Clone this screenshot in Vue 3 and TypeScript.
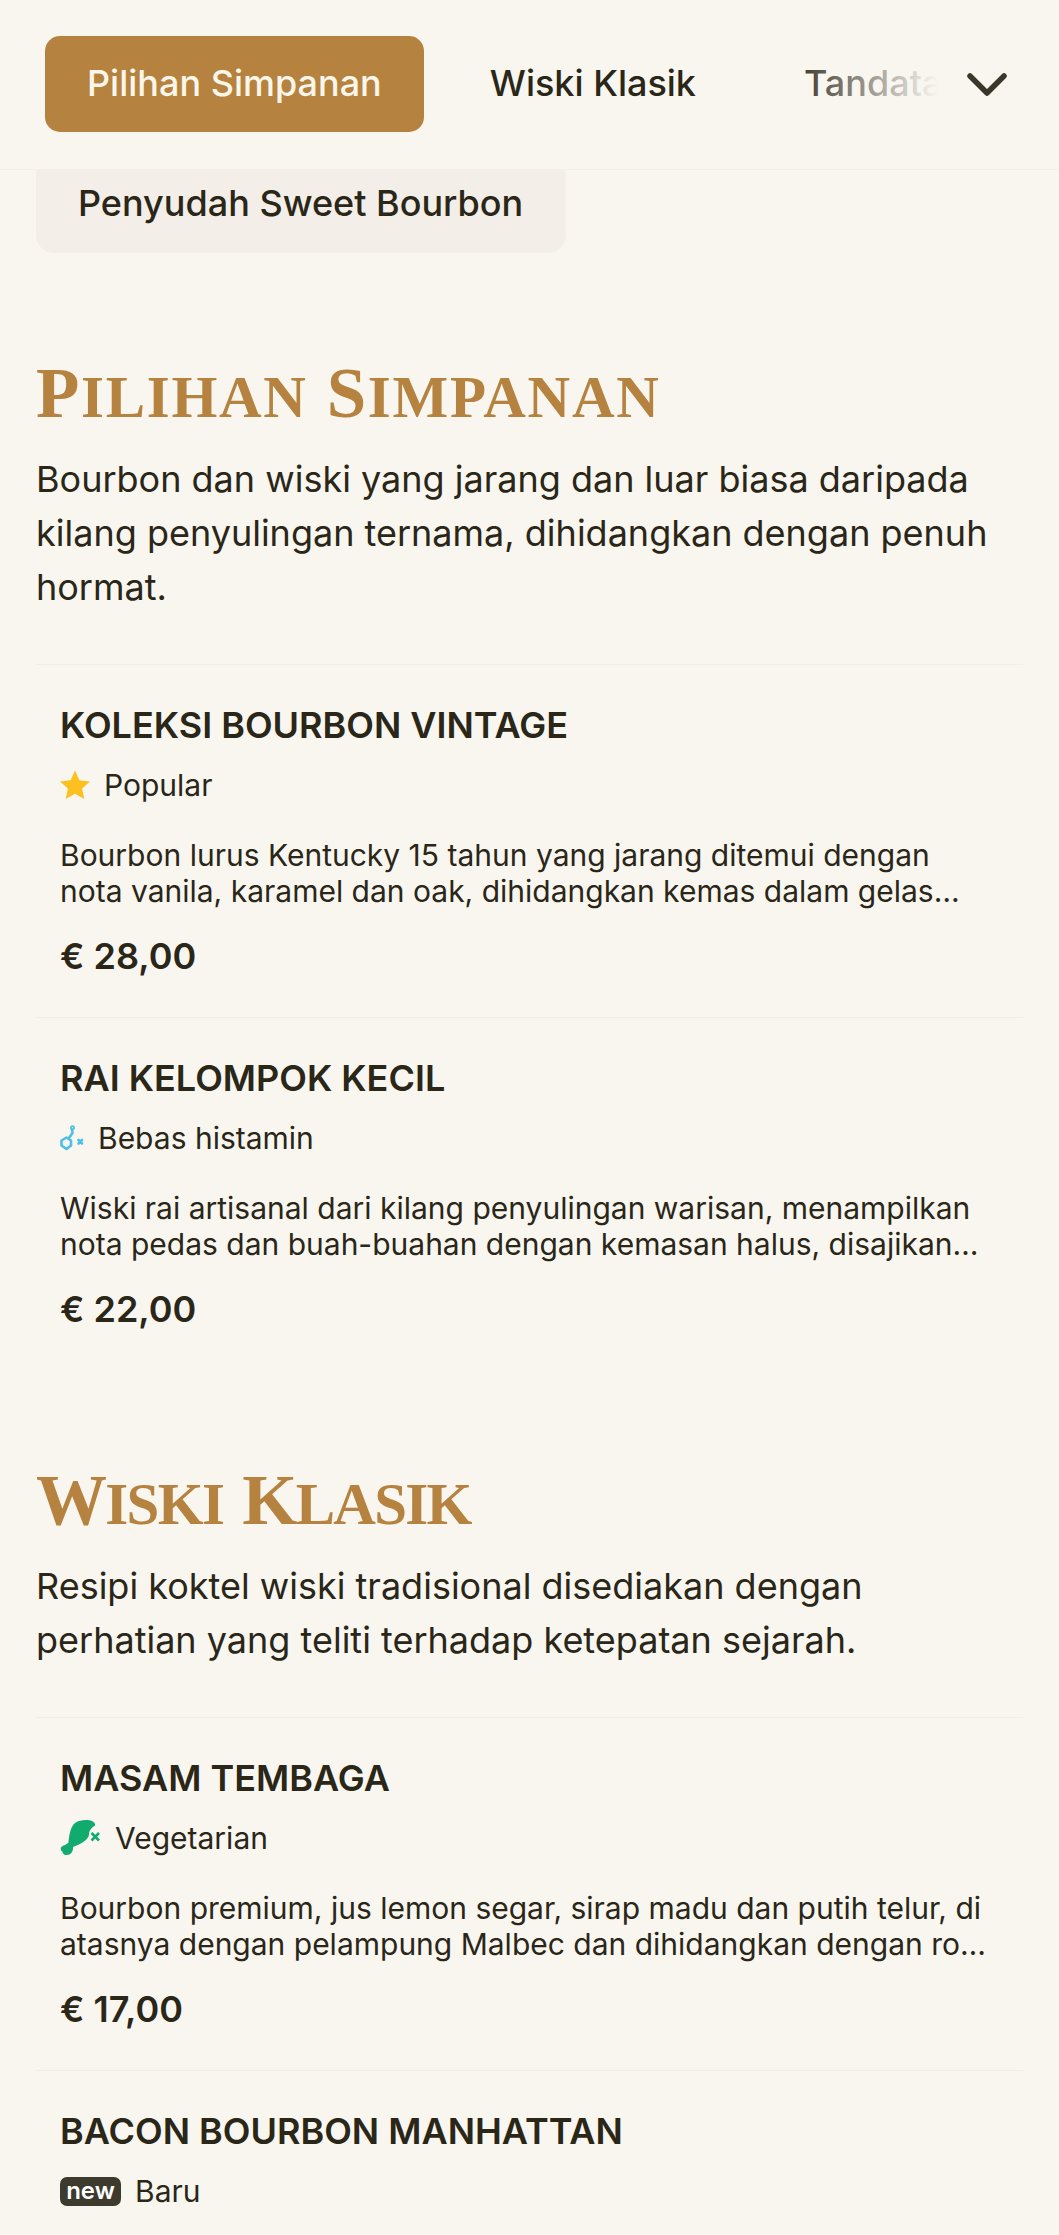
<script setup lang="ts">
type Tag = 'star' | 'histamine' | 'vegetarian' | 'new'
interface Item { name: string; tag: Tag; label: string; desc: string; price: string }
interface Section { words: string[]; tracking: number; intro: string; items: Item[] }

const tabs = ['Pilihan Simpanan', 'Wiski Klasik', 'Tandatangan Rumah']

const sections: Section[] = [
  {
    words: ['Pilihan', 'Simpanan'],
    tracking: 1.7,
    intro: 'Bourbon dan wiski yang jarang dan luar biasa daripada kilang penyulingan ternama, dihidangkan dengan penuh hormat.',
    items: [
      { name: 'KOLEKSI BOURBON VINTAGE', tag: 'star', label: 'Popular', desc: 'Bourbon lurus Kentucky 15 tahun yang jarang ditemui dengan nota vanila, karamel dan oak, dihidangkan kemas dalam gelas kristal pilihan tetamu yang budiman.', price: '€ 28,00' },
      { name: 'RAI KELOMPOK KECIL', tag: 'histamine', label: 'Bebas histamin', desc: 'Wiski rai artisanal dari kilang penyulingan warisan, menampilkan nota pedas dan buah-buahan dengan kemasan halus, disajikan bersama ais besar yang jernih.', price: '€ 22,00' },
    ],
  },
  {
    words: ['Wiski', 'Klasik'],
    tracking: -1.7,
    intro: 'Resipi koktel wiski tradisional disediakan dengan perhatian yang teliti terhadap ketepatan sejarah.',
    items: [
      { name: 'MASAM TEMBAGA', tag: 'vegetarian', label: 'Vegetarian', desc: 'Bourbon premium, jus lemon segar, sirap madu dan putih telur, di atasnya dengan pelampung Malbec dan dihidangkan dengan roh segar yang harum semerbak.', price: '€ 17,00' },
      { name: 'BACON BOURBON MANHATTAN', tag: 'new', label: 'Baru', desc: 'Bourbon diselitkan bacon, vermouth manis dan bitters.', price: '€ 19,00' },
    ],
  },
]
</script>

<template>
  <div class="page">
    <nav class="nav">
      <div class="tabs">
        <button v-for="(tab, i) in tabs" :key="tab" class="tab" :class="{ active: i === 0 }">{{ tab }}</button>
      </div>
      <div class="more">
        <svg class="chevron" viewBox="0 0 44 26" fill="none" stroke="#3a372a" stroke-width="5.5" stroke-linecap="round" stroke-linejoin="round">
          <path d="M5 5 L22 22 L39 5" />
        </svg>
      </div>
    </nav>

    <main class="content">
      <div class="chip">Penyudah Sweet Bourbon</div>

      <section v-for="section in sections" :key="section.words[0]" class="section">
        <h2 class="heading" :style="{ letterSpacing: section.tracking + 'px' }">
          <span v-for="word in section.words" :key="word" class="word"><span class="initial">{{ word[0] }}</span>{{ word.slice(1) }}</span>
        </h2>
        <p class="intro">{{ section.intro }}</p>

        <article v-for="item in section.items" :key="item.name" class="item">
          <h3 class="name">{{ item.name }}</h3>
          <div class="tag">
            <svg v-if="item.tag === 'star'" class="icon-star" viewBox="0 0 30 30">
              <path fill="#fcc11f" d="M15 0.5 L19.4 10.2 L30 11.4 L22.1 18.5 L24.3 29 L15 23.7 L5.7 29 L7.9 18.5 L0 11.4 L10.6 10.2 Z" />
            </svg>
            <svg v-else-if="item.tag === 'histamine'" class="icon-histamine" viewBox="0 0 24 26" fill="none" stroke="#4cc0e6" stroke-width="2.6" stroke-linecap="round" stroke-linejoin="round">
              <path d="M1.5 15.5 L6.5 12.5 L11 15.5 L11 20.5 L6.5 24 L1.5 20.5 Z" />
              <path d="M9 13 L12.5 8 L12 4.5" />
              <circle cx="12.5" cy="2.7" r="1.6" stroke-width="1.8" />
              <path d="M18.5 15 L22 18.5 M22 15 L18.5 18.5" />
            </svg>
            <svg v-else-if="item.tag === 'vegetarian'" class="icon-veg" viewBox="0 0 41 36">
              <path fill="#12ab6e" d="M15 3 C20 -0.5 28 -0.5 32 1 C35 2.5 36 5 34.5 6 C32 7.5 29 10 29 15 C28 19 23 22.5 20 24 L13 27 C13.5 31 11 35.5 6 35 C3.5 35 2.5 33 2.5 31.5 C0.5 31 0 27.5 2 26.5 C4 25 6 25 8.5 22.5 C9 17 10 7 15 3 Z" />
              <path fill="none" stroke="#12ab6e" stroke-width="2.6" d="M31.5 13 L39 20.5 M39 13 L31.5 20.5" />
            </svg>
            <span v-else class="badge">new</span>
            <span>{{ item.label }}</span>
          </div>
          <p class="desc">{{ item.desc }}</p>
          <div class="price">{{ item.price }}</div>
        </article>
      </section>
    </main>
  </div>
</template>

<style>
body { background: #f9f6f0; }
</style>

<style scoped>
.page {
  width: 1059px;
  height: 2235px;
  overflow: hidden;
  background: #f9f6f0;
  color: #2a2618;
  font-family: Inter, "Liberation Sans", sans-serif;
}
.nav {
  position: relative;
  z-index: 2;
  height: 170px;
  box-sizing: border-box;
  background: #f9f6f0;
  border-bottom: 1.5px solid #f3f0e9;
  overflow: hidden;
}
.tabs {
  display: flex;
  gap: 24px;
  padding: 36px 0 0 45px;
  white-space: nowrap;
}
.tab {
  flex: none;
  height: 96px;
  padding: 0 42px 2px;
  border: 0;
  border-radius: 15px;
  background: transparent;
  color: #2a2618;
  font: 500 36px Inter, sans-serif;
}
.tab.active {
  background: #b5833f;
  color: #fbf6ea;
}
.more {
  position: absolute;
  top: 0;
  right: 0;
  width: 275px;
  height: 168px;
  display: flex;
  align-items: center;
  justify-content: flex-end;
  padding-right: 50px;
  box-sizing: border-box;
  background: linear-gradient(90deg, rgba(249, 246, 240, 0), #f9f6f0 56%);
}
.chevron {
  width: 44px;
  height: 26px;
}
.content {
  padding: 0 36px;
}
.chip {
  width: 530px;
  box-sizing: border-box;
  height: 96px;
  margin-top: -13px;
  padding: 0 0 5px 42px;
  display: flex;
  align-items: center;
  border-radius: 18px;
  background: #f3efe8;
  font-size: 36px;
  font-weight: 500;
}
.section {
  margin-top: 104px;
}
.section + .section {
  margin-top: 94px;
}
.heading {
  margin: 0;
  font-family: "Liberation Serif", serif;
  font-weight: 700;
  font-size: 59px;
  line-height: 72px;
  color: #b5833f;
  text-transform: uppercase;
  display: flex;
  gap: 19px;
}
.initial {
  font-size: 71px;
}
.intro {
  margin: 19px 0 0;
  font-size: 36px;
  line-height: 54px;
}
.item {
  padding: 38px 24px 39px;
  border-top: 1.5px solid #f1eee6;
}
.intro + .item {
  margin-top: 50px;
}
.name {
  margin: 0;
  font-size: 36px;
  line-height: 44px;
  font-weight: 600;
}
.tag {
  margin-top: 16px;
  display: flex;
  align-items: center;
  gap: 14px;
  font-size: 30px;
  line-height: 44px;
}
.icon-star { width: 30px; height: 30px; }
.icon-histamine { width: 24px; height: 26px; }
.icon-veg { width: 41px; height: 36px; }
.badge {
  width: 61px;
  height: 29px;
  display: flex;
  align-items: center;
  justify-content: center;
  border-radius: 7px;
  background: #3d3a2e;
  color: #fff;
  font-size: 24px;
  font-weight: 600;
}
.desc {
  margin: 30px 0 0;
  font-size: 30px;
  line-height: 36px;
  display: -webkit-box;
  -webkit-box-orient: vertical;
  -webkit-line-clamp: 2;
  overflow: hidden;
}
.price {
  margin-top: 25px;
  font-size: 36px;
  line-height: 44px;
  font-weight: 600;
}
</style>
